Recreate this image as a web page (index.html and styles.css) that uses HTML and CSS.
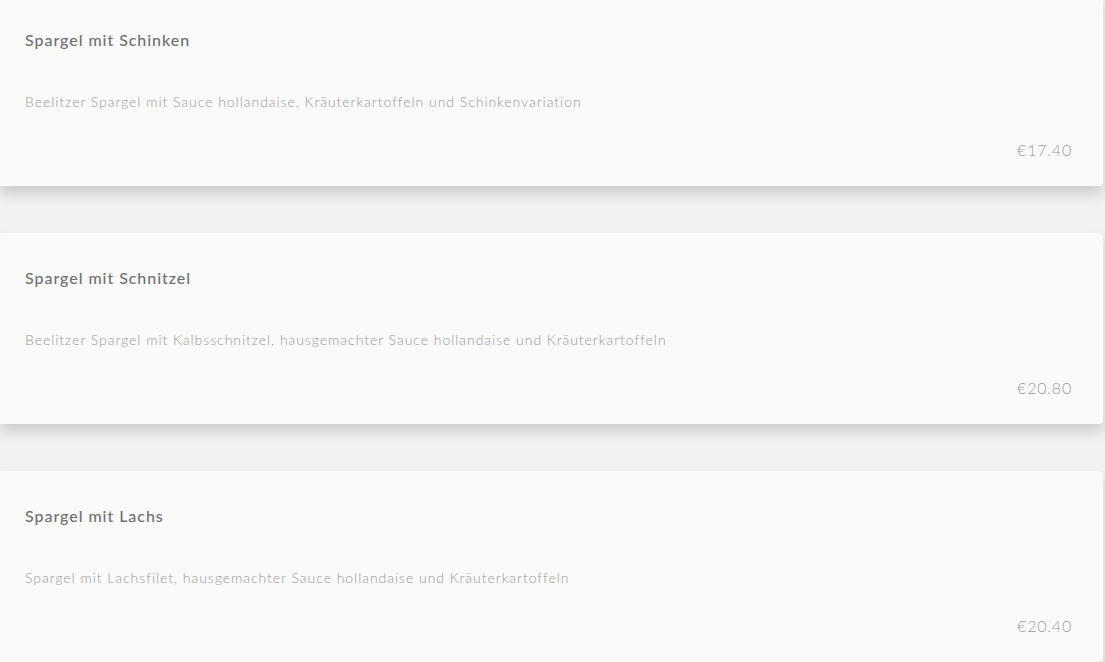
FILE: index.html
```html
<!DOCTYPE html>
<html lang="de">
  <head>
    <meta charset="UTF-8" />
    <title>Spargel</title>
    <link rel="stylesheet" href="styles.css">
  </head>
  <body>
    <div class="menu-list">
      <div class="dish-card">
        <h3 class="dish-name">Spargel mit Schinken</h3>
        <p class="dish-desc">Beelitzer Spargel mit Sauce hollandaise, Kräuterkartoffeln und Schinkenvariation</p>
        <div class="dish-price">€17.40</div>
      </div>
      <div class="dish-card">
        <h3 class="dish-name">Spargel mit Schnitzel</h3>
        <p class="dish-desc">Beelitzer Spargel mit Kalbsschnitzel, hausgemachter Sauce hollandaise und Kräuterkartoffeln</p>
        <div class="dish-price">€20.80</div>
      </div>
      <div class="dish-card">
        <h3 class="dish-name">Spargel mit Lachs</h3>
        <p class="dish-desc">Spargel mit Lachsfilet, hausgemachter Sauce hollandaise und Kräuterkartoffeln</p>
        <div class="dish-price">€20.40</div>
      </div>
    </div>
  </body>
</html>
```

FILE: styles.css
```css
body {
  margin: 0;
  padding: 0;
  background-color: #f2f2f2;
  font-family: Lato, "Liberation Sans", sans-serif;
  overflow: hidden;
}

.menu-list {
  display: flex;
  flex-direction: column;
  gap: 47px;
  width: 1103px;
  margin-top: -5px;
}

.dish-card {
  height: 191px;
  box-sizing: border-box;
  padding: 37px 31px 0 25px;
  background-color: #fafafa;
  border-radius: 0 4px 4px 0;
  box-shadow: 0 8px 14px rgba(0, 0, 0, 0.16);
  display: flex;
  flex-direction: column;
}

.dish-name {
  margin: 0;
  font-size: 16px;
  font-weight: 500;
  line-height: 16px;
  letter-spacing: 0.95px;
  color: #707070;
}

.dish-desc {
  margin: 46px 0 0 0;
  font-size: 14px;
  font-weight: 300;
  line-height: 16px;
  letter-spacing: 0.96px;
  color: #999;
}

.dish-price {
  margin-top: 32px;
  text-align: right;
  font-size: 16px;
  font-weight: 300;
  line-height: 16px;
  letter-spacing: 0.8px;
  color: #9a9a9a;
}
```
